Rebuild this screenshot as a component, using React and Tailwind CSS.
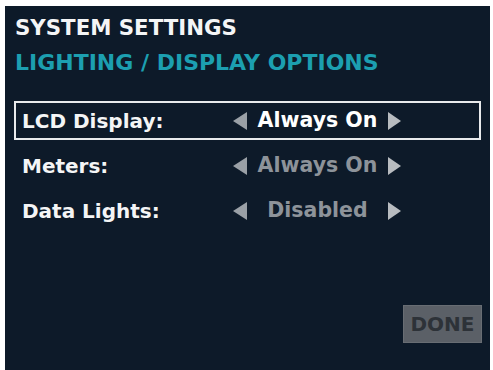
import React from 'react';

const rows = [
  { label: 'LCD Display:', value: 'Always On', selected: true, valueColor: 'text-white' },
  { label: 'Meters:', value: 'Always On', selected: false, valueColor: 'text-[#8d939a]' },
  { label: 'Data Lights:', value: 'Disabled', selected: false, valueColor: 'text-[#8d939a]' },
];

function Tri({ dir }) {
  return (
    <svg width="15" height="18" viewBox="0 0 15 18" className="shrink-0">
      {dir === 'left' ? (
        <polygon points="14,0 14,18 0,9" fill="#9aa0a6" />
      ) : (
        <polygon points="1,0 1,18 14,9" fill="#b8bcc0" />
      )}
    </svg>
  );
}

export default function App() {
  return (
    <div className="w-[493px] h-[370px] bg-white overflow-hidden pt-[6px] pl-[5px] pr-[3px]" style={{ fontFamily: '"DejaVu Sans", Verdana, sans-serif' }}>
      <div className="h-[364px] bg-[#0d1a29] flex flex-col pt-[9px]">
        <div className="pl-[10px] text-[#f4f5f6] font-bold text-[21.3px] leading-[26px]">SYSTEM SETTINGS</div>
        <div className="pl-[10px] mt-[9px] text-[#1c9fb0] font-bold text-[22px] leading-[26px]">LIGHTING / DISPLAY OPTIONS</div>

        <div className="mt-[25px] flex flex-col gap-[6px]">
          {rows.map((r) => (
            <div
              key={r.label}
              className={`ml-[9px] mr-[9px] h-[39px] flex items-center border-2 ${r.selected ? 'border-[#e8eaec]' : 'border-transparent'}`}
            >
              <div className="w-[217px] pl-[6px] text-[#f4f5f6] font-bold text-[20px]">{r.label}</div>
              <div className="flex items-center">
                <Tri dir="left" />
                <div className={`${r.valueColor} w-[139px] font-bold text-[20.5px] text-center`}>{r.value}</div>
                <Tri dir="right" />
              </div>
            </div>
          ))}
        </div>

        <div className="mt-auto mb-[27px] mr-[8px] self-end w-[79px] h-[38px] bg-[#5b6067] border border-[#686d73] flex items-center justify-center text-[#2d3238] font-bold text-[20px]">
          DONE
        </div>
      </div>
    </div>
  );
}
